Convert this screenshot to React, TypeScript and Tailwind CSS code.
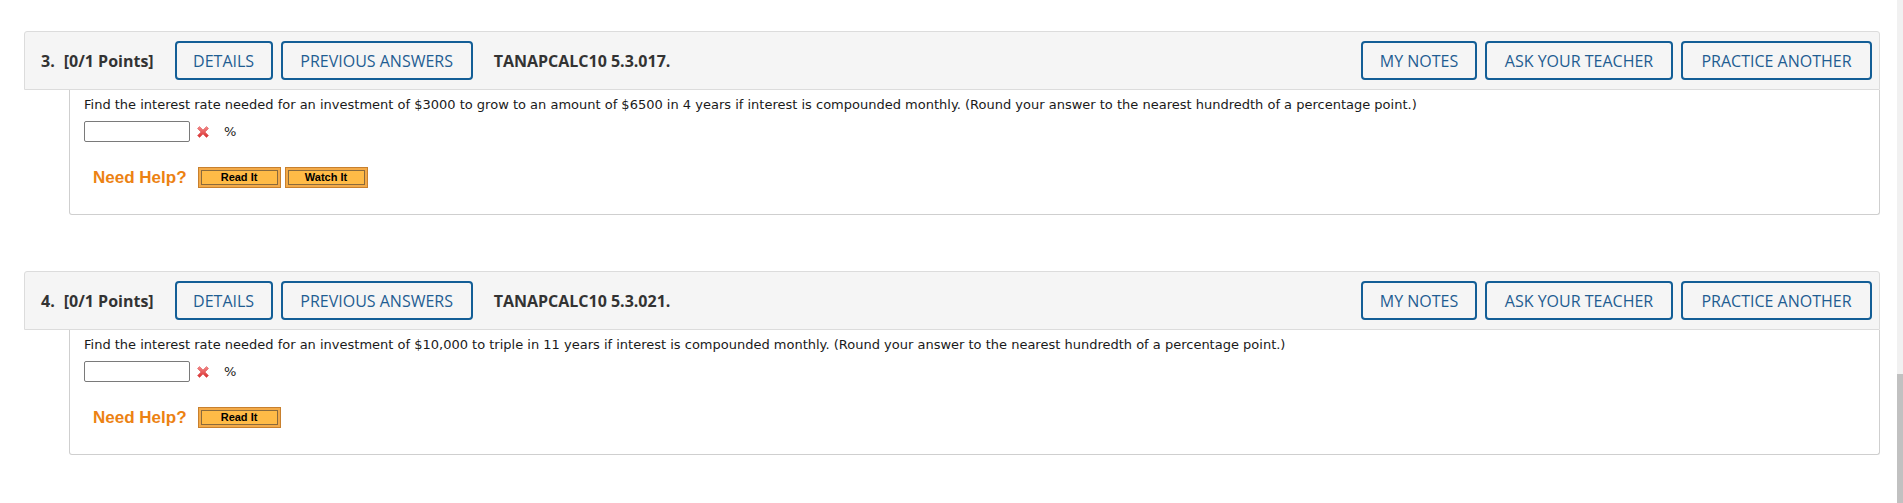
import React from "react";

function HeaderButton({ label, w }: { label: string; w: string }) {
  return (
    <button
      className={`h-[39px] ${w} flex items-center justify-center border-2 border-[#135e96] rounded-[4px] bg-[#f5f5f5] text-[#1f5d92] font-['Open_Sans',sans-serif] text-[16px] leading-[22px] whitespace-nowrap`}
    >
      {label}
    </button>
  );
}

function WrongIcon() {
  return (
    <svg width="14" height="14" viewBox="0 0 14 14" className="ml-[6px]">
      <defs>
        <linearGradient id="xg" x1="0" y1="0" x2="0" y2="1">
          <stop offset="0" stopColor="#f58a8a" />
          <stop offset="1" stopColor="#d92f2f" />
        </linearGradient>
      </defs>
      <path
        d="M1.5 3.5 L3.5 1.5 L7 5 L10.5 1.5 L12.5 3.5 L9 7 L12.5 10.5 L10.5 12.5 L7 9 L3.5 12.5 L1.5 10.5 L5 7 Z"
        fill="url(#xg)"
        stroke="#d64545"
        strokeWidth="0.5"
        strokeLinejoin="round"
      />
    </svg>
  );
}

function HelpButton({ label }: { label: string }) {
  return (
    <div className="h-[21px] w-[83px] border border-[#c8802e] bg-[#f3aa48] p-[2px] flex">
      <div className="flex-1 border border-[#8a6a3c] bg-[#ffbb47] flex items-center justify-center">
        <span className="font-['Liberation_Sans',Arial,sans-serif] font-bold text-[11px] leading-none text-black">
          {label}
        </span>
      </div>
    </div>
  );
}

function Question({
  num,
  code,
  text,
  watch,
}: {
  num: string;
  code: string;
  text: string;
  watch: boolean;
}) {
  const head =
    "font-['Open_Sans',sans-serif] font-bold text-[16px] text-[#333] whitespace-nowrap";
  return (
    <div>
      <div className="h-[59px] border border-[#dcdcdc] rounded-t-[3px] bg-[#f5f5f5] flex items-center pl-[16px] pr-[7px]">
        <span className={head}>{num}.</span>
        <span className={`ml-[9px] ${head}`}>[0/1 Points]</span>
        <div className="ml-[21px] flex gap-[8px]">
          <HeaderButton label="DETAILS" w="w-[98px]" />
          <HeaderButton label="PREVIOUS ANSWERS" w="w-[192px]" />
        </div>
        <span className={`ml-[21px] ${head}`}>{code}</span>
        <div className="ml-auto flex gap-[8px]">
          <HeaderButton label="MY NOTES" w="w-[116px]" />
          <HeaderButton label="ASK YOUR TEACHER" w="w-[188px]" />
          <HeaderButton label="PRACTICE ANOTHER" w="w-[191px]" />
        </div>
      </div>
      <div className="ml-[45px] h-[125px] border-x border-b border-[#cfcfcf] rounded-b-[3px] bg-white pt-[7px] pl-[14px]">
        <p className="font-['DejaVu_Sans',Verdana,sans-serif] text-[13px] leading-[16px] text-[#1a1a1a] whitespace-nowrap">
          {text}
        </p>
        <div className="mt-[8px] flex items-center h-[21px]">
          <input
            type="text"
            className="w-[106px] h-[21px] border border-[#7a7a7a] rounded-[2px] bg-white"
          />
          <WrongIcon />
          <span className="ml-[14px] font-['DejaVu_Sans',Verdana,sans-serif] text-[13px] text-[#1a1a1a]">
            %
          </span>
        </div>
        <div className="mt-[25px] flex items-center h-[21px] pl-[9px]">
          <span className="font-['Liberation_Sans',Arial,sans-serif] font-bold text-[17px] leading-none text-[#ec8213]">
            Need Help?
          </span>
          <div className="ml-[11px] flex gap-[4px]">
            <HelpButton label="Read It" />
            {watch && <HelpButton label="Watch It" />}
          </div>
        </div>
      </div>
    </div>
  );
}

export default function App() {
  return (
    <div className="h-[503px] w-full bg-white flex overflow-hidden">
      <div className="flex-1 pl-[24px] pr-[17px] pt-[31px] flex flex-col gap-[56px]">
        <Question
          num="3"
          code="TANAPCALC10 5.3.017."
          text="Find the interest rate needed for an investment of $3000 to grow to an amount of $6500 in 4 years if interest is compounded monthly. (Round your answer to the nearest hundredth of a percentage point.)"
          watch={true}
        />
        <Question
          num="4"
          code="TANAPCALC10 5.3.021."
          text="Find the interest rate needed for an investment of $10,000 to triple in 11 years if interest is compounded monthly. (Round your answer to the nearest hundredth of a percentage point.)"
          watch={false}
        />
      </div>
      <div className="w-[6px] bg-[#f1f1f1] flex flex-col justify-end">
        <div className="h-[129px] bg-[#c1c1c1]" />
      </div>
    </div>
  );
}
